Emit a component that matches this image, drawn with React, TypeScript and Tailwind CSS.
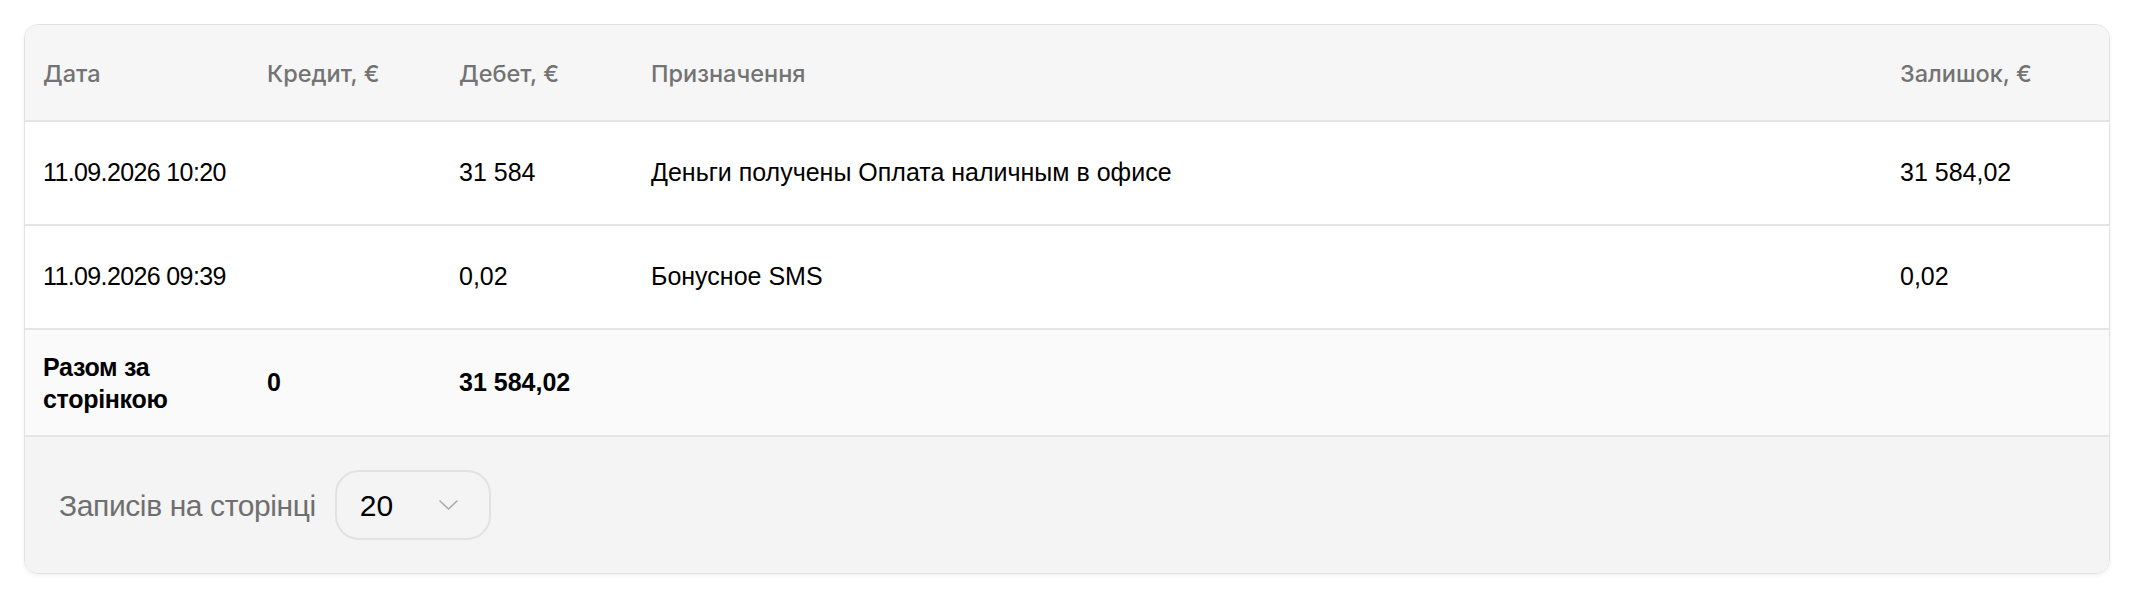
import React from 'react';

const rows = [
  { date: '11.09.2026 10:20', credit: '', debit: '31 584', purpose: 'Деньги получены Оплата наличным в офисе', balance: '31 584,02' },
  { date: '11.09.2026 09:39', credit: '', debit: '0,02', purpose: 'Бонусное SMS', balance: '0,02' },
];

export default function App() {
  return (
    <div className="min-h-screen bg-white p-[24px] pr-[26px] font-['Liberation_Sans',Arial,sans-serif]">
      <div className="overflow-hidden rounded-[14px] border border-[#e2e2e2] shadow-[0_2px_4px_rgba(0,0,0,0.06)]">
        <table className="w-full table-fixed border-collapse text-left">
          <colgroup>
            <col className="w-[224px]" />
            <col className="w-[192px]" />
            <col className="w-[192px]" />
            <col />
            <col className="w-[227px]" />
          </colgroup>
          {/* шапка */}
          <thead>
            <tr className="h-[96px] bg-[#f6f6f6] font-['Inter',sans-serif] text-[23.5px] text-[#737373]">
              <th className="pl-[18px] pt-[2px] font-medium">Дата</th>
              <th className="pl-[18px] pt-[2px] font-medium">Кредит, €</th>
              <th className="pl-[18px] pt-[2px] font-medium">Дебет, €</th>
              <th className="pl-[18px] pt-[2px] font-medium">Призначення</th>
              <th className="pl-[18px] pt-[2px] font-medium">Залишок, €</th>
            </tr>
          </thead>
          <tbody className="text-[25px] text-black">
            {rows.map((r) => (
              <tr key={r.date} className="h-[104px] border-t-2 border-[#e5e5e5] bg-white">
                <td className="pl-[18px] tracking-[-0.025em]">{r.date}</td>
                <td className="pl-[18px]">{r.credit}</td>
                <td className="pl-[18px]">{r.debit}</td>
                <td className="pl-[18px]">{r.purpose}</td>
                <td className="pl-[18px]">{r.balance}</td>
              </tr>
            ))}
            {/* итог */}
            <tr className="h-[106px] border-t-2 border-[#e5e5e5] bg-[#fafafa] font-bold">
              <td className="pl-[18px] leading-[32px] tracking-[-0.012em]">
                Разом за
                <br />
                сторінкою
              </td>
              <td className="pl-[18px]">0</td>
              <td className="pl-[18px]">31 584,02</td>
              <td />
              <td />
            </tr>
          </tbody>
        </table>

        {/* пагинация */}
        <div className="flex h-[138px] items-center gap-[19px] border-t-2 border-[#e5e5e5] bg-[#f4f4f4] pl-[34px]">
          <span className="text-[30px] tracking-[-0.013em] text-[#6f6f6f]">Записів на сторінці</span>
          <button className="flex h-[70px] w-[156px] items-center justify-between rounded-[24px] border-2 border-[#e2e2e2] pl-[23px] pr-[31px] text-[30px] text-black">
            20
            <svg className="h-[10px] w-[19px]" viewBox="0 0 19 10" fill="none" stroke="#a8a8a8" strokeWidth={1.5} strokeLinecap="round" strokeLinejoin="round">
              <path d="M1 1l8.5 8L18 1" />
            </svg>
          </button>
        </div>
      </div>
    </div>
  );
}
